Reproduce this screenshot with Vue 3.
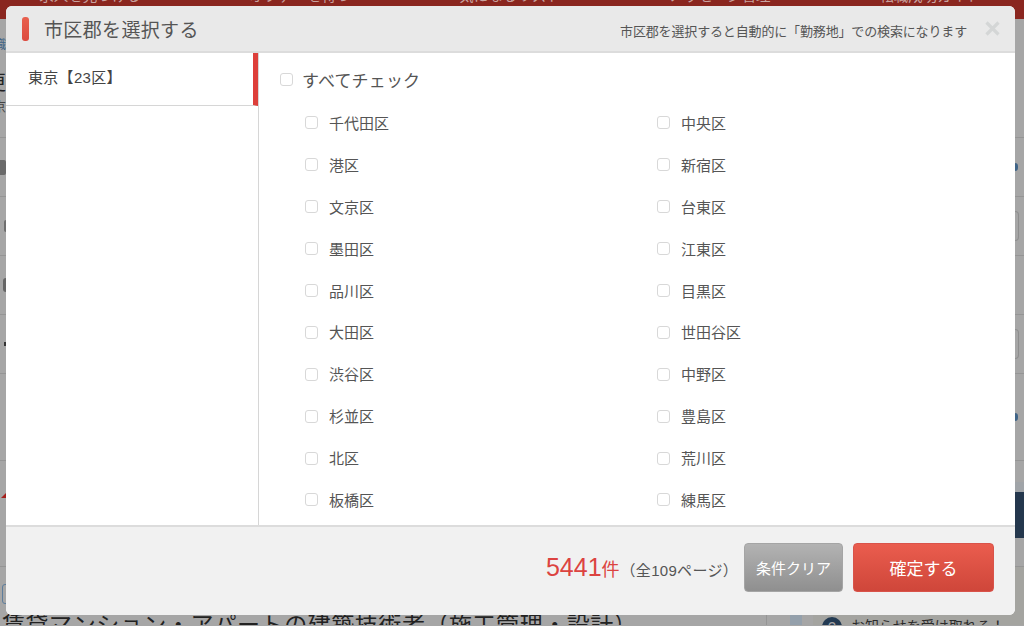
<template>
  <div class="page">
    <!-- page behind the dialog, dimmed -->
    <div class="nav">
      <span v-for="n in NAV" :key="n">{{ n }}</span>
    </div>
    <div class="under">
      <div class="under-head">
        <div class="crumb">職</div>
        <div class="head-big">更</div>
        <div class="head-small">京</div>
      </div>
      <div
        v-for="r in ROWS"
        :key="r.h + r.left + r.right"
        class="under-row"
        :style="{ height: r.h + 'px' }"
      >
        <i :class="r.left"></i>
        <i :class="r.right"></i>
      </div>
      <div class="under-bottom">
        <div class="job">
          <i class="job-tag"></i>
          <div class="job-title">賃貸マンション・アパートの建築技術者（施工管理・設計）</div>
        </div>
        <i class="side-gap"></i>
        <div class="side-note"><i class="qmark">?</i>お知らせを受け取れる！</div>
      </div>
    </div>

    <div class="modal">
      <header class="modal-head">
        <div class="head-title"><i class="head-mark"></i><h2>市区郡を選択する</h2></div>
        <p class="head-note">市区郡を選択すると自動的に「勤務地」での検索になります</p>
        <svg class="close" width="15" height="15" viewBox="0 0 15 15" aria-label="閉じる">
          <path d="M1.5 1.5 13.5 13.5M13.5 1.5 1.5 13.5" stroke="#d4d6d6" stroke-width="3.2" />
        </svg>
      </header>

      <div class="modal-body">
        <aside class="areas">
          <div class="area">東京【23区】</div>
        </aside>
        <section class="cities">
          <label class="check-all"><i class="box"></i>すべてチェック</label>
          <ul class="city-grid">
            <li v-for="c in CITIES" :key="c"><i class="box"></i>{{ c }}</li>
          </ul>
        </section>
      </div>

      <footer class="modal-foot">
        <div class="count"><em>5441</em><span class="unit">件</span><span class="pages">（全109ページ）</span></div>
        <button class="btn btn-clear">条件クリア</button>
        <button class="btn btn-ok">確定する</button>
      </footer>
    </div>
  </div>
</template>

<script setup>
const NAV = ['求人を見つける', 'オファーを待つ', '気になるリスト', 'メッセージ管理', '転職成功ガイド'];
const CITIES = [
  '千代田区', '中央区', '港区', '新宿区', '文京区', '台東区', '墨田区', '江東区', '品川区', '目黒区',
  '大田区', '世田谷区', '渋谷区', '中野区', '杉並区', '豊島区', '北区', '荒川区', '板橋区', '練馬区',
];
// rows of the page behind the dialog: only their edges show
const ROWS = [
  { h: 59, left: 'mark-a', right: 'dot-blue' },
  { h: 59, left: 'mark-b', right: 'outline' },
  { h: 59, left: 'mark-c', right: 'none' },
  { h: 59, left: 'mark-d', right: 'outline' },
  { h: 87, left: 'none', right: 'dot-blue' },
  { h: 106, left: 'tri', right: 'navy' },
];
</script>

<style>
html, body { margin: 0; overflow: hidden; }
</style>

<style scoped>
.page {
  position: relative;
  width: 1024px;
  height: 626px;
  overflow: hidden;
  background: #a6a6a6;
  font-family: "Liberation Sans", "Noto Sans CJK JP", sans-serif;
  color: #444;
}

.nav {
  height: 19px;
  width: 1050px;
  margin-left: -15px;
  background: #8a261f;
  display: grid;
  grid-template-columns: repeat(5, 210px);
  justify-items: center;
  overflow: hidden;
  font-size: 14.5px;
  line-height: 8px;
  color: #c9a3a0;
}
.nav span { margin-top: -8px; display: block; }

.under-head { height: 118px; overflow: hidden; }
.crumb { font-size: 12px; line-height: 14px; color: #3f6487; padding-top: 19px; margin-left: -6px; }
.head-big { font-size: 20px; line-height: 24px; color: #222; margin: 19px 0 0 -14px; }
.head-small { font-size: 13px; line-height: 16px; color: #444; margin: 4px 0 0 -7px; }

.under-row {
  box-sizing: border-box;
  border-top: 1px solid #959595;
  display: flex;
  align-items: center;
  justify-content: space-between;
}
.mark-a { width: 6px; height: 15px; background: #6a6a6a; border-radius: 0 2px 2px 0; }
.mark-b { width: 2px; height: 12px; margin-left: 4px; background: #6e6e6e; border-radius: 2px 0 0 2px; }
.mark-c { width: 3px; height: 14px; margin-left: 3px; background: #666; border-radius: 3px 0 0 3px; }
.mark-d { width: 2px; height: 4px; margin-left: 4px; background: #333; }
.tri {
  width: 0;
  height: 0;
  margin: 32px 0 0 1px;
  align-self: flex-start;
  border-left: 5px solid transparent;
  border-bottom: 5px solid #a5201c;
}
.none { width: 1px; }
.dot-blue { width: 3px; height: 8px; margin-right: 6px; background: #3f6487; border-radius: 0 3px 3px 0; }
.outline {
  width: 4px;
  height: 28px;
  margin-right: 5px;
  border: 1px solid #8e8e8e;
  border-left: 0;
  border-radius: 0 4px 4px 0;
}
.navy {
  align-self: flex-start;
  width: 9px;
  height: 46px;
  margin-top: 31px;
  background: #24374d;
  box-shadow: 0 -10px 0 #a0a4a8;
}

.under-bottom {
  height: 59px;
  box-sizing: border-box;
  border-top: 1px solid #959595;
  display: flex;
  overflow: hidden;
}
.job { width: 767px; flex: none; border-right: 1px solid #959595; box-sizing: border-box; }
.job-tag { display: block; width: 16px; height: 20px; margin: 17px 0 0 2px; box-sizing: border-box; border: 1px solid #5d7d9c; border-radius: 3px; }
.job-title { font-size: 23px; line-height: 30px; letter-spacing: 0.55px; color: #222; white-space: nowrap; padding-left: 2px; margin-top: 6px; }
.side-gap { width: 46px; flex: none; background: linear-gradient(90deg, #a6a6a6 23px, #94a0ab 23px, #94a0ab 35px, #a6a6a6 35px); }
.side-note { flex: 1; background: #a4a4a0; display: flex; gap: 9px; padding: 50px 0 0 9px; font-size: 14px; line-height: 18px; color: #2b2b2b; white-space: nowrap; }
.qmark { width: 20px; height: 20px; flex: none; border-radius: 50%; background: #233a52; color: #a6a6a6; font-style: normal; font-size: 14px; text-align: center; line-height: 20px; }

.modal {
  position: absolute;
  left: 6px;
  top: 6px;
  width: 1009px;
  height: 609px;
  display: flex;
  flex-direction: column;
  border-radius: 6px;
  overflow: hidden;
  background: #fff;
}

.modal-head {
  height: 47px;
  flex: none;
  box-sizing: border-box;
  display: flex;
  align-items: center;
  background: #e9e9e9;
  border-bottom: 2px solid #dcdcdc;
  padding: 0 15px 0 16px;
}
.head-title { display: flex; align-items: center; gap: 15px; flex: 1; }
.head-mark { width: 7px; height: 24px; border-radius: 3px; background: linear-gradient(#e8604e, #dc4a3e); }
.head-title h2 { margin: 0; font-size: 19px; font-weight: 400; color: #555; letter-spacing: 0.35px; }
.head-note { margin: 3px 18px 0 0; font-size: 13px; color: #555; letter-spacing: -0.15px; }
.close { display: block; }

.modal-body { flex: 1; display: flex; min-height: 0; }

.areas { width: 252px; flex: none; border-right: 1px solid #d6d6d6; }
.area {
  height: 53px;
  box-sizing: border-box;
  padding-left: 22px;
  font-size: 15px;
  line-height: 50px;
  letter-spacing: 0.3px;
  color: #444;
  border-bottom: 1px solid #d6d6d6;
  border-right: 5px solid #dd3f3a;
}

.cities { flex: 1; padding: 14px 0 0 21px; overflow: hidden; }
.box {
  display: inline-block;
  flex: none;
  box-sizing: border-box;
  width: 13px;
  height: 13px;
  margin-top: 1px;
  border: 1px solid #d8d8d8;
  border-radius: 3px;
  background: #fff;
}
.check-all { display: flex; align-items: center; gap: 9px; height: 24px; font-size: 17px; letter-spacing: 0.15px; color: #555; }
.city-grid {
  list-style: none;
  margin: 10.5px 0 0;
  padding: 0 0 0 25px;
  display: grid;
  grid-template-columns: 352px 1fr;
  grid-auto-rows: 41.9px;
}
.city-grid li { display: flex; align-items: center; gap: 11px; font-size: 15px; color: #555; }

.modal-foot {
  height: 90px;
  flex: none;
  box-sizing: border-box;
  border-top: 2px solid #dcdcdc;
  background: #f1f1f1;
  display: flex;
  align-items: center;
  justify-content: flex-end;
  padding: 0 21px 8px 0;
}
.count { margin-right: 6px; color: #555; font-size: 15px; display: flex; align-items: baseline; }
.count em { font-style: normal; font-size: 25px; color: #dc4340; }
.unit { font-size: 18px; color: #dc4340; }
.pages { margin-left: 1px; letter-spacing: 0.3px; }
.btn {
  height: 49px;
  border-radius: 4px;
  color: #fff;
  font-family: inherit;
  padding: 0;
}
.btn-clear {
  width: 99px;
  margin-right: 10px;
  font-size: 15px;
  border: 1px solid #a5a5a5;
  background: linear-gradient(#b3b3b3, #8f8f8f);
}
.btn-ok {
  width: 141px;
  font-size: 17px;
  border: 1px solid #d9534a;
  background: linear-gradient(#ea5d4e, #cf463a);
}
</style>
